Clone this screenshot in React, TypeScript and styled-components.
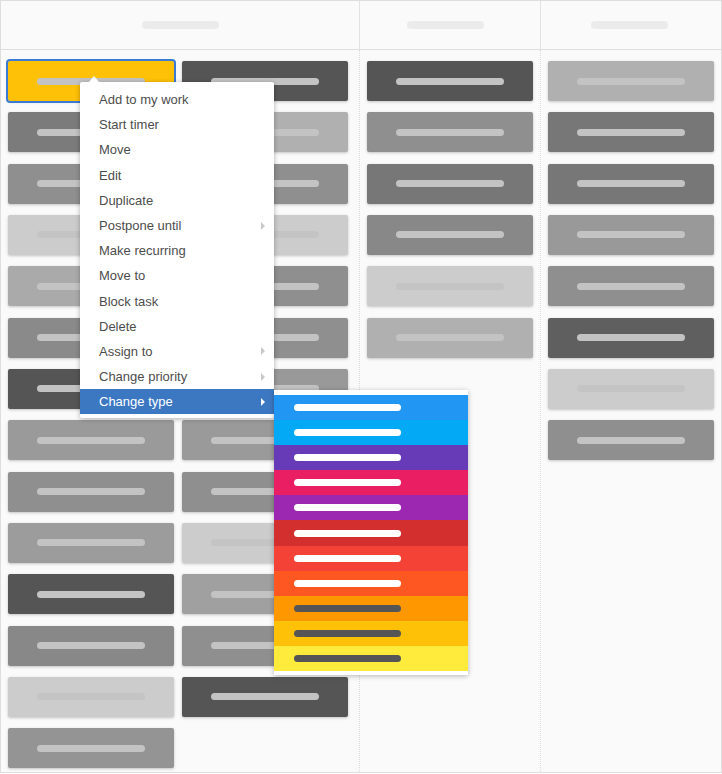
import React from "react";
import styled, { createGlobalStyle } from "styled-components";

const Global = createGlobalStyle`
  html, body { margin: 0; padding: 0; background: #ffffff; }
  body { font-family: "Liberation Sans", Arial, sans-serif; }
  * { box-sizing: border-box; }
`;

const Board = styled.div`
  position: relative;
  width: 722px;
  height: 773px;
  border: 1px solid #dedede;
  background: #fafafa;
  display: flex;
  overflow: hidden;
`;

const Column = styled.div<{ $w: number }>`
  width: ${(p) => p.$w}px;
  flex: none;
  display: flex;
  flex-direction: column;
`;

const ColumnHeader = styled.div<{ $last?: boolean; $shift: number }>`
  height: 49px;
  border-bottom: 1px solid #dedede;
  border-right: ${(p) => (p.$last ? "none" : "1px solid #e2e2e2")};
  display: flex;
  align-items: center;
  justify-content: center;
  padding-right: ${(p) => p.$shift}px;
`;

const HeaderPill = styled.div`
  width: 77px;
  height: 8px;
  border-radius: 4px;
  background: #ebebeb;
`;

const ColumnBody = styled.div<{ $cols: number; $last?: boolean }>`
  flex: 1;
  border-right: ${(p) => (p.$last ? "none" : "1px dotted #dcdcdc")};
  padding: 11px 7px 0 7px;
  display: grid;
  grid-template-columns: repeat(${(p) => p.$cols}, 166px);
  grid-auto-rows: 40px;
  column-gap: 8px;
  row-gap: 11.33px;
  align-content: start;
`;

const Card = styled.div<{ $bg: string; $selected?: boolean }>`
  position: relative;
  background: ${(p) => p.$bg};
  border-radius: 2px;
  box-shadow: 0 1px 3px rgba(0, 0, 0, 0.22);
  display: flex;
  align-items: center;
  justify-content: center;
  outline: ${(p) => (p.$selected ? "2px solid #3b7bd3" : "none")};
`;

const Pill = styled.div<{ $c?: string; $w?: number }>`
  width: ${(p) => p.$w ?? 108}px;
  height: 7px;
  border-radius: 4px;
  background: ${(p) => p.$c ?? "#c3c3c3"};
`;

const Menu = styled.div`
  position: absolute;
  left: 79px;
  top: 81px;
  width: 194px;
  background: #ffffff;
  padding: 5px 0 4px;
  box-shadow: 0 1px 5px rgba(0, 0, 0, 0.3);
  border-radius: 2px;
  z-index: 2;
`;

const Caret = styled.div`
  position: absolute;
  left: 9px;
  top: -6px;
  width: 0;
  height: 0;
  border-left: 5px solid transparent;
  border-right: 5px solid transparent;
  border-bottom: 6px solid #ffffff;
`;

const MenuItem = styled.div<{ $active?: boolean }>`
  height: 25.2px;
  display: flex;
  align-items: center;
  justify-content: space-between;
  padding: 0 9px 0 19px;
  font-size: 13px;
  color: ${(p) => (p.$active ? "#ffffff" : "#4d4d4d")};
  background: ${(p) => (p.$active ? "#3c78c2" : "transparent")};
  white-space: nowrap;
`;

const Arrow = styled.span<{ $active?: boolean }>`
  width: 0;
  height: 0;
  border-top: 4px solid transparent;
  border-bottom: 4px solid transparent;
  border-left: 4px solid ${(p) => (p.$active ? "#ffffff" : "#c9c9c9")};
`;

const SubMenu = styled.div`
  position: absolute;
  left: 273px;
  top: 389px;
  width: 194px;
  background: #ffffff;
  padding: 5px 0 4px;
  box-shadow: 0 1px 5px rgba(0, 0, 0, 0.28);
  z-index: 3;
`;

const TypeRow = styled.div<{ $bg: string }>`
  height: 25.1px;
  background: ${(p) => p.$bg};
  display: flex;
  align-items: center;
  padding-left: 20px;
`;

const col1 = [
  ["#ffc107", "#555555"],
  ["#7b7b7b", "#b0b0b0"],
  ["#8f8f8f", "#8f8f8f"],
  ["#cccccc", "#cccccc"],
  ["#aaaaaa", "#8f8f8f"],
  ["#8a8a8a", "#8f8f8f"],
  ["#555555", "#999999"],
  ["#9a9a9a", "#9a9a9a"],
  ["#8f8f8f", "#8f8f8f"],
  ["#9c9c9c", "#cccccc"],
  ["#555555", "#a0a0a0"],
  ["#888888", "#8f8f8f"],
  ["#cccccc", "#555555"],
  ["#949494", null],
];
const col2 = ["#555555", "#8f8f8f", "#777777", "#888888", "#cccccc", "#b0b0b0"];
const col3 = ["#b0b0b0", "#777777", "#777777", "#999999", "#8f8f8f", "#5f5f5f", "#cccccc", "#8f8f8f"];

const menuItems: [string, boolean][] = [
  ["Add to my work", false],
  ["Start timer", false],
  ["Move", false],
  ["Edit", false],
  ["Duplicate", false],
  ["Postpone until", true],
  ["Make recurring", false],
  ["Move to", false],
  ["Block task", false],
  ["Delete", false],
  ["Assign to", true],
  ["Change priority", true],
];

const types: [string, boolean][] = [
  ["#2196f3", true],
  ["#03a9f4", true],
  ["#673ab7", true],
  ["#e91e63", true],
  ["#9c27b0", true],
  ["#d32f2f", true],
  ["#f44336", true],
  ["#ff5722", true],
  ["#ff9800", false],
  ["#ffc107", false],
  ["#ffeb3b", false],
];

const pillFor = (bg: string) => (bg === "#cccccc" ? "#c4c4c4" : "#c3c3c3");

export default function App() {
  const c1: { bg: string; sel: boolean }[] = [];
  col1.forEach((row, i) => {
    row.forEach((bg, j) => {
      if (bg) c1.push({ bg, sel: i === 0 && j === 0 });
    });
  });
  return (
    <>
      <Global />
      <Board>
        <Column $w={359}>
          <ColumnHeader $shift={0}>
            <HeaderPill />
          </ColumnHeader>
          <ColumnBody $cols={2}>
            {c1.map((c, i) => (
              <Card key={i} $bg={c.bg} $selected={c.sel}>
                <Pill $c={pillFor(c.bg)} />
              </Card>
            ))}
          </ColumnBody>
        </Column>
        <Column $w={181}>
          <ColumnHeader $shift={10}>
            <HeaderPill />
          </ColumnHeader>
          <ColumnBody $cols={1}>
            {col2.map((bg, i) => (
              <Card key={i} $bg={bg}>
                <Pill $c={pillFor(bg)} />
              </Card>
            ))}
          </ColumnBody>
        </Column>
        <Column $w={180}>
          <ColumnHeader $last $shift={4}>
            <HeaderPill />
          </ColumnHeader>
          <ColumnBody $cols={1} $last>
            {col3.map((bg, i) => (
              <Card key={i} $bg={bg}>
                <Pill $c={pillFor(bg)} />
              </Card>
            ))}
          </ColumnBody>
        </Column>

        <Menu>
          <Caret />
          {menuItems.map(([label, sub]) => (
            <MenuItem key={label}>
              <span>{label}</span>
              {sub && <Arrow />}
            </MenuItem>
          ))}
          <MenuItem $active>
            <span>Change type</span>
            <Arrow $active />
          </MenuItem>
        </Menu>

        <SubMenu>
          {types.map(([bg, light]) => (
            <TypeRow key={bg} $bg={bg}>
              <Pill $w={107} $c={light ? "#ffffff" : "#555555"} />
            </TypeRow>
          ))}
        </SubMenu>
      </Board>
    </>
  );
}
